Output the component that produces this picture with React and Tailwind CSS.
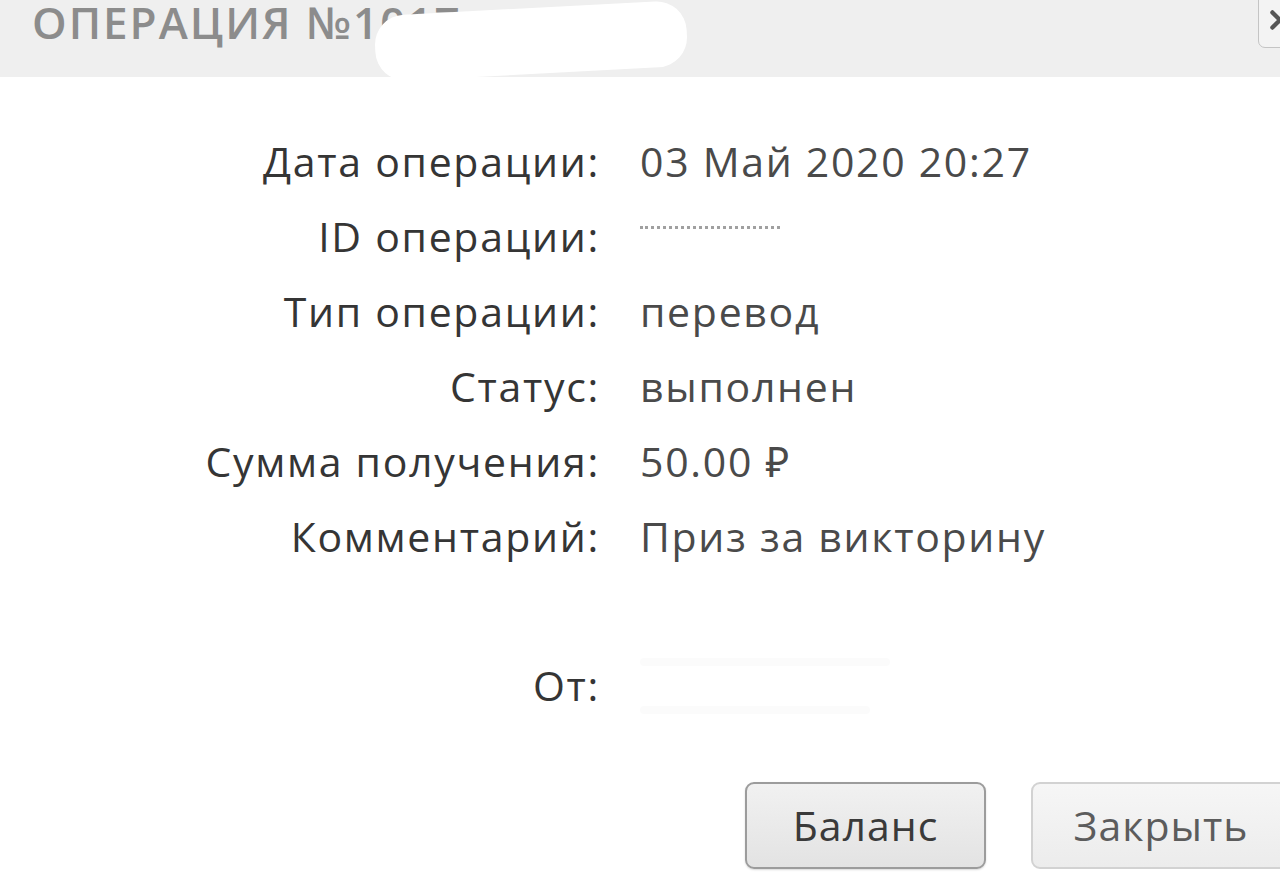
import React from "react";

const rows = [
  { label: "Дата операции:", value: "03 Май 2020 20:27" },
  { label: "ID операции:", value: "", redacted: true },
  { label: "Тип операции:", value: "перевод" },
  { label: "Статус:", value: "выполнен" },
  { label: "Сумма получения:", value: "50.00 ₽" },
  { label: "Комментарий:", value: "Приз за викторину" },
];

const App = () => {
  return (
    <div
      className="relative h-[891px] w-[1280px] overflow-hidden bg-white"
      style={{ fontFamily: '"Open Sans", "Noto Sans", sans-serif' }}
    >
      {/* header */}
      <div className="relative h-[77px] bg-[#efefef] pl-[32px]">
        <h1 className="text-[44px] font-semibold uppercase leading-none tracking-[2px] text-[#8c8c8c]">
          Операция №1017
        </h1>
        <div className="absolute left-[375px] top-[8px] h-[66px] w-[312px] -rotate-[3deg] rounded-[30px] bg-white" />
        <div className="absolute -top-[8px] left-[1258px] flex h-[56px] w-[40px] items-center rounded-[7px] border border-[#c4c4c4] bg-[#f3f3f3] pl-[8px]">
          <svg width="26" height="26" viewBox="0 0 24 24" fill="none" stroke="#555" strokeWidth="4" strokeLinecap="round">
            <path d="M5 5l14 14M19 5L5 19" />
          </svg>
        </div>
      </div>

      {/* details */}
      <div className="mt-[47px] text-[41px] leading-[75px] tracking-[1.7px]">
        {rows.map((row) => (
          <div key={row.label} className="flex">
            <div className="w-[600px] text-right text-[#353535]">{row.label}</div>
            <div className="pl-[40px] text-[#4a4a4a]">
              {row.redacted ? (
                <span className="inline-block w-[150px] align-middle">
                  <span className="block h-[3px] w-[140px] -translate-y-[14px] border-t-[3px] border-dotted border-[#a0a0a0]" />
                </span>
              ) : (
                row.value
              )}
            </div>
          </div>
        ))}
        <div className="h-[74px]" />
        <div className="flex">
          <div className="w-[600px] text-right text-[#353535]">От:</div>
          <div className="flex flex-col justify-center gap-[40px] pl-[40px]">
            <span className="block h-[8px] w-[250px] rounded bg-[#fbfbfb]" />
            <span className="block h-[8px] w-[230px] rounded bg-[#fbfbfb]" />
          </div>
        </div>
      </div>

      {/* buttons */}
      <div className="mt-[59px] flex gap-[45px] pl-[745px]">
        <button className="h-[87px] w-[241px] shrink-0 rounded-[9px] border-2 border-[#9c9c9c] bg-linear-to-b from-[#f1f1f1] to-[#e3e3e3] text-[41px] tracking-[1px] text-[#3a3a3a] shadow-[0_1px_2px_rgba(0,0,0,0.15)]">
          Баланс
        </button>
        <button className="h-[87px] w-[260px] shrink-0 rounded-[9px] border-2 border-[#d2d2d2] bg-linear-to-b from-[#f6f6f6] to-[#ececec] text-[41px] tracking-[1px] text-[#5c5c5c]">
          Закрыть
        </button>
      </div>
    </div>
  );
};

export default App;
